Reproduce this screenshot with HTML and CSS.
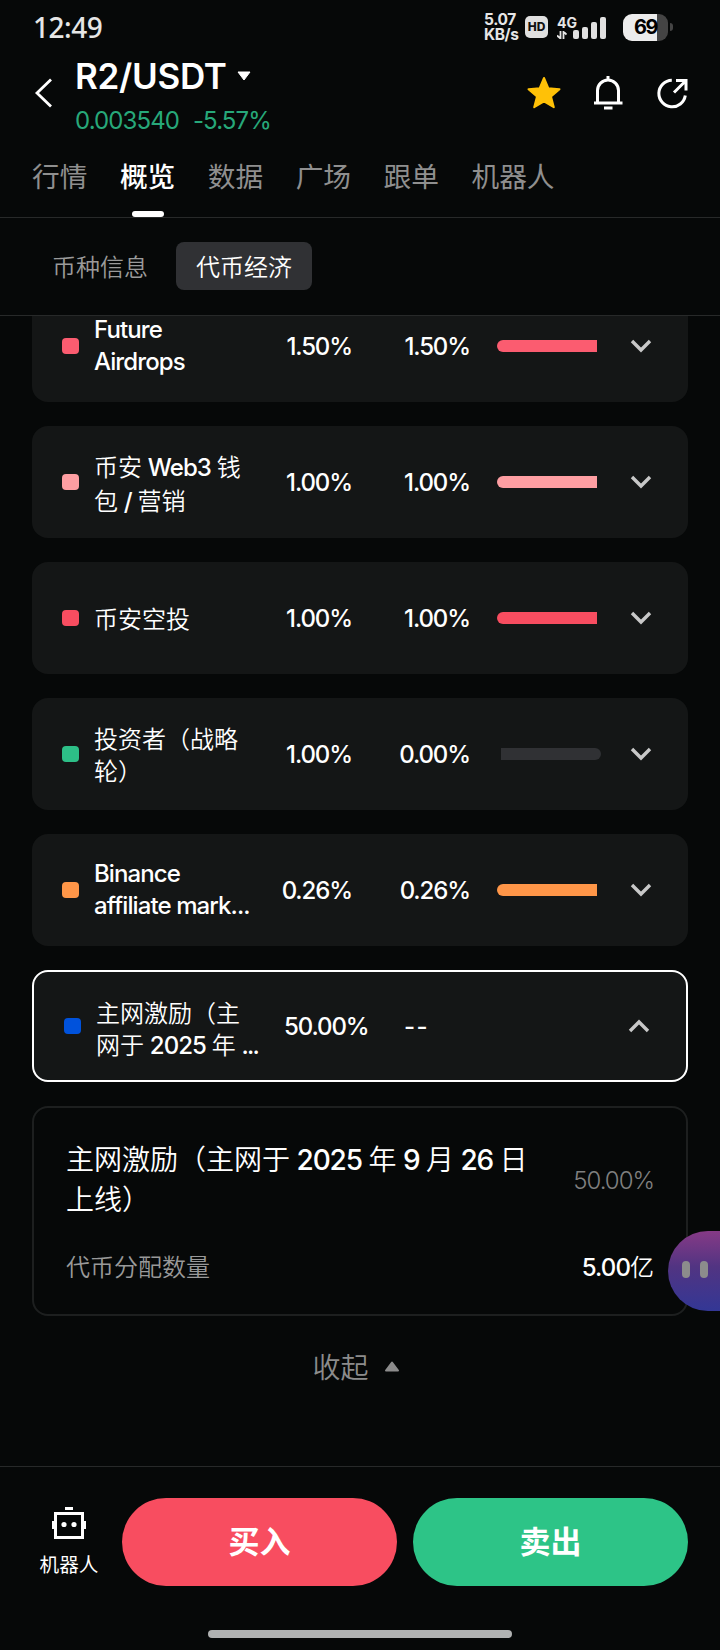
FILE: index.html
```html
<!DOCTYPE html>
<html lang="zh-CN">
<head>
    <meta charset="utf-8" />
    <title>R2/USDT</title>
    <link rel="stylesheet" href="styles.css">
</head>
<body>
    <div class="status-bar">
        <div class="time">12:49</div>
        <div class="status-icons">
            <div class="net-speed"><span>5.07</span><span>KB/s</span></div>
            <div class="hd">HD</div>
            <div class="signal">
                <div class="signal-type">
                    <span>4G</span>
                    <svg width="10" height="8" viewBox="0 0 10 8"><path d="M3.5 0v8M0 4.500l3.500 3M6.500 8V0M6.500.5l3 3" fill="none" stroke="#e6e6e6" stroke-width="1.800" /></svg>
                </div>
                <svg class="signal-bars" width="34" height="22" viewBox="0 0 34 22" fill="#e0e0e0">
                    <rect x="0" y="13" width="6" height="9" rx="2" />
                    <rect x="9" y="10" width="6" height="12" rx="2" />
                    <rect x="18" y="5" width="6" height="17" rx="2" />
                    <rect x="27" y="0" width="6" height="22" rx="2" />
                </svg>
            </div>
            <div class="battery"><span>69</span></div>
            <div class="battery-tip"></div>
        </div>
    </div>

    <header class="header">
        <svg class="back" width="18" height="30" viewBox="0 0 18 30"><path d="M17 1.500L3 15l14 13.500" fill="none" stroke="#fff" stroke-width="2.800" /></svg>
        <div class="pair">
            <div class="pair-name">R2/USDT <svg width="14" height="10" viewBox="0 0 14 10"><path d="M1 1h12L7 9z" fill="#fff" stroke="#fff" stroke-linejoin="round" /></svg></div>
            <div class="pair-price"><span>0.003540</span><span>-5.57%</span></div>
        </div>
        <div class="actions">
            <svg width="36" height="36" viewBox="0 0 36 36"><path d="M18 3l4.300 10.200 11.200 1-8.500 7.200 2.800 10.800L18 26.300l-9.800 5.900L11 21.400l-8.500-7.200 11.200-1z" fill="#ffc107" stroke="#ffc107" stroke-width="2" stroke-linejoin="round" /></svg>
            <svg width="36" height="36" viewBox="0 0 36 36" fill="none" stroke="#fff" stroke-width="3"><path d="M18 1v4M7.500 27V15.500a10.500 10.500 0 0 1 21 0V27M4 28h28.500M14 33h8.500" /></svg>
            <svg width="36" height="36" viewBox="0 0 36 36" fill="none" stroke="#fff" stroke-width="3"><path d="M17.800 5.200a13.300 13.300 0 1 0 13.500 15.300M20 17.500L31 6.500M22 5.500h10v10" /></svg>
        </div>
    </header>

    <nav class="tabs">
        <div class="tab">行情</div>
        <div class="tab active">概览</div>
        <div class="tab">数据</div>
        <div class="tab">广场</div>
        <div class="tab">跟单</div>
        <div class="tab">机器人</div>
    </nav>

    <div class="sub-tabs">
        <div class="sub-tab">币种信息</div>
        <div class="sub-tab active">代币经济</div>
    </div>

    <main class="list">
        <div class="row">
            <i class="dot rose"></i>
            <div class="name latin"><b>Future<br>Airdrops</b></div>
            <div class="total">1.50%</div>
            <div class="unlocked">1.50%</div>
            <div class="bar"><div class="fill rose"></div></div>
            <svg class="chevron" width="22" height="14" viewBox="0 0 22 14"><path d="M2 2l9 9 9-9" /></svg>
        </div>
        <div class="row">
            <i class="dot pink"></i>
            <div class="name wide">币安 <b>Web3</b> 钱<br>包 <b>/</b> 营销</div>
            <div class="total">1.00%</div>
            <div class="unlocked">1.00%</div>
            <div class="bar"><div class="fill pink"></div></div>
            <svg class="chevron" width="22" height="14" viewBox="0 0 22 14"><path d="M2 2l9 9 9-9" /></svg>
        </div>
        <div class="row">
            <i class="dot red"></i>
            <div class="name">币安空投</div>
            <div class="total">1.00%</div>
            <div class="unlocked">1.00%</div>
            <div class="bar"><div class="fill red"></div></div>
            <svg class="chevron" width="22" height="14" viewBox="0 0 22 14"><path d="M2 2l9 9 9-9" /></svg>
        </div>
        <div class="row">
            <i class="dot green"></i>
            <div class="name">投资者（战略<br>轮）</div>
            <div class="total">1.00%</div>
            <div class="unlocked">0.00%</div>
            <div class="bar"><div class="rest"></div></div>
            <svg class="chevron" width="22" height="14" viewBox="0 0 22 14"><path d="M2 2l9 9 9-9" /></svg>
        </div>
        <div class="row">
            <i class="dot orange"></i>
            <div class="name latin"><b>Binance<br>affiliate mark...</b></div>
            <div class="total">0.26%</div>
            <div class="unlocked">0.26%</div>
            <div class="bar"><div class="fill orange"></div></div>
            <svg class="chevron" width="22" height="14" viewBox="0 0 22 14"><path d="M2 2l9 9 9-9" /></svg>
        </div>
        <div class="row open">
            <i class="dot blue"></i>
            <div class="name">主网激励（主<br>网于 <b>2025</b> 年 <b class="more">...</b></div>
            <div class="total">50.00%</div>
            <div class="unlocked dashes">--</div>
            <svg class="chevron" width="22" height="14" viewBox="0 0 22 14"><path d="M2 12l9-9 9 9" /></svg>
        </div>

        <div class="detail">
            <div class="detail-head">
                <div class="detail-title">主网激励（主网于 <b>2025</b> 年 <b>9</b> 月 <b>26</b> 日<br>上线）</div>
                <div class="detail-percent">50.00%</div>
            </div>
            <div class="detail-line">
                <div class="detail-label">代币分配数量</div>
                <div class="detail-value"><b>5.00</b>亿</div>
            </div>
        </div>

        <div class="collapse">收起 <svg width="16" height="11" viewBox="0 0 16 11"><path d="M8 1.500l6 8H2z" fill="#8c8c8c" stroke="#8c8c8c" stroke-width="2" stroke-linejoin="round" /></svg></div>
    </main>

    <footer class="footer">
        <div class="bot">
            <svg width="34" height="32" viewBox="0 0 34 32" fill="#fff"><path d="M3.500 6.500h27v24h-27z" fill="none" stroke="#fff" stroke-width="3" /><path d="M13 0h8v3h-8zM0 14h3v8H0zM31 14h3v8h-3z" /><circle cx="12" cy="17.500" r="2.600" /><circle cx="22" cy="17.500" r="2.600" /></svg>
            <span>机器人</span>
        </div>
        <button class="buy">买入</button>
        <button class="sell">卖出</button>
    </footer>
    <div class="home-bar"></div>

    <div class="assistant"><i></i><i></i></div>
</body>
</html>
```
FILE: styles.css
```css
* {
    box-sizing: border-box;
}
body {
    margin: 0;
    width: 720px;
    height: 1650px;
    display: flex;
    flex-direction: column;
    position: relative;
    overflow: hidden;
    background: #060808;
    color: #fff;
    font-family: Inter, "Noto Sans CJK SC", sans-serif;
    font-size: 24px;
}
b {
    font-weight: 500;
    letter-spacing: -0.9px;
}
svg {
    flex: none;
}

/* status bar */
.status-bar {
    height: 54px;
    padding: 0 47px 0 33px;
    display: flex;
    align-items: center;
    justify-content: space-between;
    color: #e6e6e6;
}
.time {
    font: 500 28px/54px "Noto Sans", sans-serif;
    letter-spacing: -0.5px;
}
.status-icons {
    display: flex;
    align-items: center;
}
.net-speed {
    width: 41px;
    display: flex;
    flex-direction: column;
    font: 700 15.5px/15px Inter, sans-serif;
    letter-spacing: -0.4px;
}
.hd {
    width: 23px;
    height: 22px;
    border-radius: 5px;
    background: #e0e0e0;
    color: #111;
    font: 800 12px/22px Inter, sans-serif;
    text-align: center;
}
.signal {
    display: flex;
    align-items: flex-end;
    margin: 0 16px 0 9px;
}
.signal-type {
    width: 17px;
    display: flex;
    flex-direction: column;
    gap: 1px;
    font: 700 14px/14px Inter, sans-serif;
    white-space: nowrap;
}
.signal-bars {
    margin-left: -1px;
}
.battery {
    width: 45px;
    height: 27px;
    border-radius: 9px;
    background: linear-gradient(90deg, #ececec 34px, #444 34px);
    color: #000;
    font: 700 20px/27px Inter, sans-serif;
    letter-spacing: -1.5px;
    text-align: center;
}
.battery-tip {
    width: 3px;
    height: 8px;
    margin-left: 2px;
    border-radius: 0 4px 4px 0;
    background: #444;
}

/* header */
.header {
    height: 84px;
    padding: 0 30px 0 34px;
    display: flex;
}
.back {
    margin-top: 24px;
}
.pair {
    margin-left: 23px;
    padding-top: 1px;
}
.pair-name {
    display: flex;
    align-items: center;
    gap: 10px;
    font-size: 35px;
    font-weight: 600;
    line-height: 42px;
    letter-spacing: -0.3px;
}
.pair-price {
    display: flex;
    gap: 14px;
    margin-top: 9px;
    font-size: 24px;
    line-height: 30px;
    letter-spacing: -0.9px;
    color: #27a87a;
}
.actions {
    display: flex;
    gap: 28px;
    margin: 21px 0 0 auto;
}

/* tabs */
.tabs {
    height: 80px;
    padding: 0 32px;
    display: flex;
    gap: 32.5px;
    border-bottom: 1px solid #272929;
}
.tab {
    height: 79px;
    font-size: 27.7px;
    line-height: 79px;
    color: #8f8f8f;
}
.tab.active {
    display: flex;
    flex-direction: column;
    align-items: center;
    color: #fff;
    font-weight: 500;
}
.tab.active::after {
    content: "";
    width: 32px;
    height: 6px;
    margin-top: -6px;
    border-radius: 3px;
    background: #fff;
    flex: none;
}
.sub-tabs {
    height: 98px;
    padding: 24px 32px;
    display: flex;
    gap: 8px;
    border-bottom: 1px solid #272929;
}
.sub-tab {
    height: 48px;
    padding: 0 20px;
    border-radius: 8px;
    font-weight: 350;
    line-height: 52px;
    color: #9a9a9a;
}
.sub-tab.active {
    background: #303134;
    color: #fff;
}

/* allocation list */
.list {
    height: 1150px;
    padding: 0 32px;
    display: flex;
    flex-direction: column;
    justify-content: flex-end;
    overflow: hidden;
}
.row {
    height: 112px;
    flex: none;
    margin-bottom: 24px;
    padding: 0 36px 0 30px;
    display: flex;
    align-items: center;
    border-radius: 16px;
    background: #141616;
}
.row.open {
    border: 2px solid #fff;
}
.dot {
    width: 17px;
    height: 16px;
    margin-right: 15px;
    border-radius: 4px;
}
.name {
    width: 163px;
    padding-top: 4px;
    font-weight: 350;
    line-height: 32px;
    white-space: nowrap;
}
.name.wide {
    padding-top: 6px;
    line-height: 34px;
    word-spacing: -1px;
}
.name.latin {
    padding-top: 0;
}
.open .name {
    padding-top: 8px;
    word-spacing: -1px;
}
.more {
    letter-spacing: -1.8px;
}
.total,
.unlocked {
    width: 95px;
    font-weight: 450;
    letter-spacing: -1.1px;
    text-align: right;
}
.unlocked {
    width: 118px;
}
.open .total {
    padding-left: 25px;
    text-align: left;
}
.open .unlocked {
    padding-left: 50px;
    text-align: left;
}
.open .dashes {
    letter-spacing: 1.5px;
}
.bar {
    width: 104px;
    height: 12px;
    margin-left: 27px;
    display: flex;
}
.fill {
    width: 100px;
    border-radius: 6px 0 0 6px;
}
.rest {
    width: 100px;
    margin-left: 4px;
    border-radius: 0 6px 6px 0;
    background: #303134;
}
.chevron {
    margin-left: auto;
    fill: none;
    stroke: #c8c8c8;
    stroke-width: 3.4;
}
.rose { background: #fb5c70; }
.pink { background: #fe9ea2; }
.red { background: #f84d60; }
.green { background: #2dbf87; }
.orange { background: #ff9648; }
.blue { background: #0052dc; }

/* expanded item */
.detail {
    height: 210px;
    flex: none;
    padding: 32px;
    border: 2px solid #1d1f1f;
    border-radius: 16px;
}
.detail-head,
.detail-line {
    display: flex;
    align-items: center;
    justify-content: space-between;
}
.detail-title {
    font-size: 28px;
    font-weight: 350;
    line-height: 40px;
    word-spacing: -1.4px;
}
.detail-title b {
    letter-spacing: -1.1px;
}
.detail-percent {
    color: #808080;
    font-weight: 350;
    letter-spacing: -1px;
}
.detail-line {
    margin-top: 32px;
    line-height: 32px;
    font-weight: 350;
}
.detail-label {
    color: #999;
}
.collapse {
    height: 150px;
    flex: none;
    display: flex;
    justify-content: center;
    gap: 15px;
    padding-right: 8px;
    font-size: 28px;
    font-weight: 350;
    line-height: 104px;
    color: #8c8c8c;
}
.collapse svg {
    margin-top: 45px;
}

/* bottom actions */
.footer {
    height: 164px;
    padding: 31px 32px 0 39px;
    display: flex;
    gap: 16px;
    border-top: 1px solid #272929;
}
.bot {
    width: 60px;
    margin-right: 7px;
    padding-top: 9px;
    display: flex;
    flex: none;
    flex-direction: column;
    align-items: center;
    font-size: 19.6px;
    line-height: 30px;
    white-space: nowrap;
}
.bot span {
    margin-top: 11px;
}
button {
    width: 275px;
    height: 88px;
    padding: 0;
    border: 0;
    border-radius: 44px;
    color: #fff;
    font: 700 31px/86px Inter, "Noto Sans CJK SC", sans-serif;
}
.buy {
    background: #f84d60;
}
.sell {
    background: #2dc487;
}
.home-bar {
    width: 304px;
    height: 8px;
    margin: 0 auto;
    border-radius: 4px;
    background: #b0b2b2;
}

/* floating assistant, half hidden behind the screen edge */
.assistant {
    position: absolute;
    right: 0;
    top: 1231px;
    width: 52px;
    height: 80px;
    padding: 30px 0 0 14px;
    display: flex;
    gap: 10px;
    border-radius: 40px 0 0 40px;
    background: linear-gradient(#863a86, #513482 45%, #333795);
}
.assistant i {
    width: 8px;
    height: 17px;
    border-radius: 4px;
    background: #8c8c8c;
}
```
